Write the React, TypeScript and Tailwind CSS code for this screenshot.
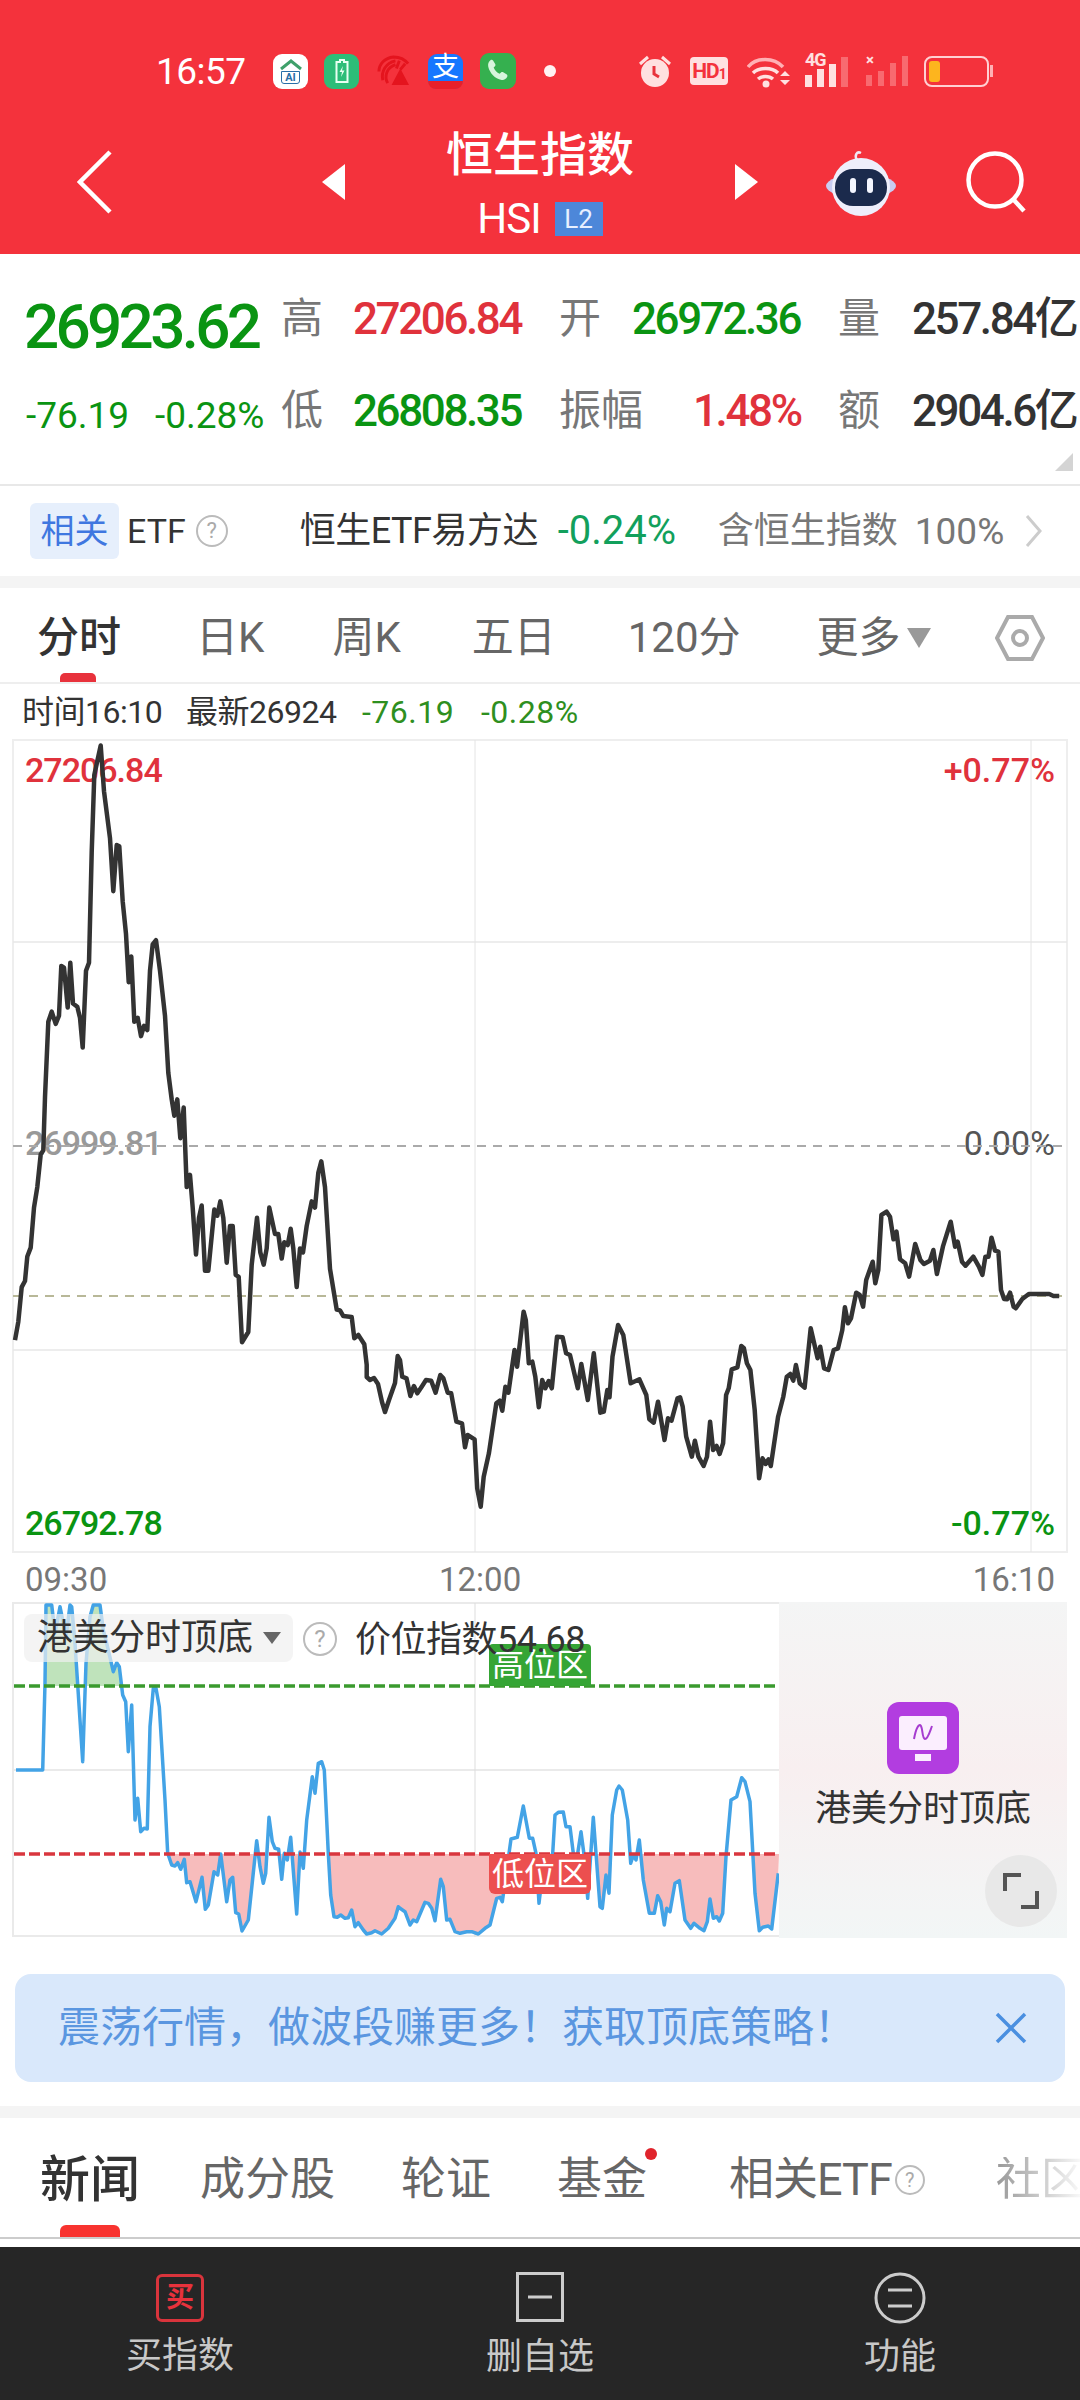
const font = "font-[Roboto,'Noto_Sans_CJK_SC',sans-serif]";

// traced from the chart, [x, y] pairs in the crop's own scale
const toPoints = (raw: number[], ox: number, sx: number, oy: number, sy: number) => {
  const out: string[] = [];
  for (let i = 0; i < raw.length; i += 2) {
    out.push(`${(ox + raw[i] / sx).toFixed(1)},${(oy + raw[i + 1] / sy).toFixed(1)}`);
  }
  return out;
};

const priceA = [
  45,1495,55,1450,65,1365,75,1350,82,1290,92,1268,102,1170,112,1120,122,1040,130,1030,135,900,145,715,155,690,167,720,177,700,184,578,192,582,203,680,211,570,219,670,232,678,240,705,248,778,258,590,267,570,275,300,283,110,302,38,312,150,330,265,340,395,350,282,358,285,368,420,378,500,386,618,394,555,403,715,413,705,423,750,432,725,442,735,450,590,458,525,468,515,480,590,495,700,505,840,515,905,523,945,532,905,541,1000,551,925,560,1120,570,1090,578,1170,588,1285,597,1195,605,1165,615,1325,625,1325,643,1175,652,1190,661,1155,670,1195,680,1305,690,1215,698,1215,707,1335,716,1340,726,1500,745,1475,755,1310,771,1195,781,1280,791,1310,800,1270,808,1170,825,1235,835,1235,845,1295,853,1255,863,1262,872,1222,880,1270,890,1365,900,1270,909,1280,920,1215,935,1155,945,1170,955,1085,964,1057,975,1120,990,1320,1010,1420,1020,1422,1030,1436,1055,1438,1063,1490,1075,1482,1093,1505,1100,1555,
];
const priceB = [
  366.7,1377,370,1380,374,1378,378,1384,382,1402,385,1412,389,1400,395,1383,397.7,1356,
];
const priceC = [
  0,780,5,830,15,835,24,888,32,858,40,880,50,860,60,840,72,842,82,878,93,825,100,835,110,878,118,880,130,965,143,970,150,1042,156,1005,172,1018,178,1165,186,1220,193,1130,205,1060,222,910,230,902,236,932,243,860,250,878,264,750,270,800,285,635,290,660,297,790,305,785,312,830,320,922,328,840,335,865,343,843,350,865,362,710,375,712,383,760,392,765,410,865,418,792,433,900,447,760,462,938,470,935,478,870,483,892,490,770,503,675,515,705,532,850,552,838,568,885,575,958,585,968,595,905,610,1020,618,955,626,962,640,895,646,892,652,920,660,1010,673,1070,680,1022,688,1070,700,1098,708,1070,715,965,722,1050,730,1038,737,1062,745,1030,752,885,758,865,765,808,778,802,787,738,793,745,800,790,808,810,818,930,828,1135,836,1075,843,1092,850,1078,855,1098,872,950,884,890,892,830,900,822,907,842,913,795,922,850,933,863,947,685,963,775,969,740,978,805,988,810,1000,750,1010,745,1020,690,1026,622,1033,670,1040,655,1052,578,1060,585,1068,620,1075,540,1090,485,1096,550,1103,510,1110,345,1122,335,1130,350,1138,418,1145,395,1153,478,1165,490,1174,530,1188,432,1200,480,1208,492,1222,482,1230,450,1238,522,1252,440,1270,365,1280,440,1286,425,1296,485,1304,497,1322,470,1335,500,1343,525,1350,470,1357,470,1364,413,1372,452,1380,455,1386,570,1393,597,1400,598,1407,578,1415,620,1420,625,1435,597,1450,582,1497,582,1507,588,1520,588,
];
const pricePoints = [
  ...toPoints(priceA, 0, 3, 730, 2.45),
  ...toPoints(priceB, 0, 1, 0, 1),
  ...toPoints(priceC, 400, 2.306, 1100, 3),
].join(" ");

const levelA = [
  48,510,128,510,135,250,138,15,155,15,165,100,180,20,198,110,210,15,215,20,225,130,248,485,258,190,270,50,280,15,300,15,310,90,320,130,340,215,350,188,358,200,368,285,377,305,385,455,395,315,405,660,413,595,422,695,432,685,442,687,450,380,460,265,468,265,478,320,495,600,503,760,515,795,525,798,533,788,542,808,553,778,560,848,570,845,588,905,606,832,616,928,625,915,642,815,653,825,662,762,680,905,690,840,698,832,707,938,716,942,726,993,745,960,770,722,780,800,790,850,797,820,807,652,817,725,825,745,836,748,845,838,853,760,862,780,872,712,890,942,900,756,910,805,920,660,937,530,945,580,955,490,965,485,973,510,985,760,992,885,1002,950,1012,952,1022,945,1035,955,1045,953,1055,930,1065,980,1075,968,1090,990,1100,1002,1115,998,1125,992,1145,1002,1165,985,1185,955,1195,920,
];
const levelB = [
  0,925,15,935,30,975,40,960,50,965,75,907,85,910,95,925,105,962,122,838,130,860,140,960,150,958,165,995,180,1000,200,995,215,995,235,1002,255,985,270,975,290,895,300,892,307,905,333,717,352,712,370,618,388,715,398,715,408,760,417,910,430,800,445,790,458,760,465,645,475,637,490,636,498,680,510,680,520,760,530,780,543,695,553,770,563,895,580,652,600,920,607,925,618,825,627,880,637,645,650,570,657,558,667,570,683,660,692,790,700,765,708,780,718,720,730,840,748,940,763,940,773,887,782,905,793,975,800,925,810,935,825,850,838,842,855,960,872,985,882,970,900,985,912,992,922,965,930,897,940,955,950,950,958,963,968,940,978,770,993,600,1010,590,1025,533,1035,545,1050,605,1065,880,1078,992,1088,982,1105,978,1115,987,1135,820,
];
const levelList = [...toPoints(levelA, 0, 3, 1600, 3), ...toPoints(levelB, 400, 3, 1600, 3)];
const levelPoints = levelList.join(" ");

const Help = ({ className }: { className: string }) => (
  <span
    className={`flex shrink-0 items-center justify-center rounded-full border-2 border-[#bbb] text-[#aaa] ${className}`}
  >
    ?
  </span>
);

const StatusBar = () => (
  <div className="flex items-center h-[36px] pl-[156px]">
    <span className="w-[90px] text-[37px] leading-none text-white tracking-[-0.5px]">16:57</span>
    {/* notification icons */}
    <div className="ml-[27px] size-[35px] rounded-[9px] bg-white flex flex-col items-center justify-center">
      <svg viewBox="0 0 24 12" className="w-[24px] h-[12px]">
        <path d="M2 10 L12 2 L22 10" fill="none" stroke="#3fa06a" strokeWidth="3" />
      </svg>
      <span className="text-[11px] leading-none font-bold text-[#2a6fa8] border border-[#2a6fa8] rounded-b-[3px] px-[3px]">
        AI
      </span>
    </div>
    <div className="ml-[16px] size-[35px] rounded-[9px] bg-[#2dbd78] flex items-center justify-center">
      <svg viewBox="0 0 14 24" className="w-[14px] h-[24px]">
        <path d="M5 1h4v2h3.500v20h-11V3H5z" fill="none" stroke="#e8fff2" strokeWidth="2" />
        <path d="M8 7 4.500 13H7l-1 5 3.500-6.500H7z" fill="#e8fff2" />
      </svg>
    </div>
    <svg viewBox="0 0 34 34" className="ml-[18px] w-[33px] h-[33px]" fill="none" stroke="#e4141e" strokeWidth="3">
      <path d="M2 17 C2 9 8 3 17 2 C24 2 29 5 32 9" />
      <path d="M6 26 C4 17 9 8 19 6" />
      <path d="M11 29 C7 22 10 13 19 10" />
      <path d="M23 6 L20 14 M29 9 L24 15" />
      <path d="M24 14 L33 31 H15Z" fill="#e4141e" stroke="none" />
    </svg>
    <div className="relative ml-[18px] w-[35px] h-[35px] rounded-[9px] bg-[#1677ff]">
      <span className="absolute inset-x-0 top-0 text-center text-[27px] leading-[27px] text-white">支</span>
      <div className="absolute inset-x-0 bottom-0 h-[8px] rounded-b-[9px] bg-[#e8202a]" />
    </div>
    <div className="ml-[17px] size-[36px] rounded-[9px] bg-[#35b04f] flex items-center justify-center">
      <svg viewBox="0 0 24 24" className="size-[26px]">
        <path
          d="M5 2c1-.6 2-.3 2.600.600l1.800 3c.4.700.300 1.500-.200 2l-1.200 1.200c1 2.500 3 4.700 5.500 5.800l1.300-1.200c.500-.5 1.300-.6 2-.2l3 1.800c.9.600 1.200 1.700.600 2.600-1 1.800-2.800 3-5 2.600C9 19 4.500 14 3 8c-.5-2.400.3-4.800 2-6z"
          fill="#d6f5dc"
        />
      </svg>
    </div>
    <div className="ml-[28px] size-[12px] rounded-full bg-[#fff2f2]" />

    {/* system icons */}
    <svg viewBox="0 0 32 33" className="ml-[83px] w-[32px] h-[33px]">
      <path d="M1 9 9 2M31 9l-8-7" stroke="#ffe0e0" strokeWidth="3" />
      <circle cx="16" cy="18" r="14" fill="#ffe0e0" />
      <path d="M15 11v8l5 3" fill="none" stroke="#e8323c" strokeWidth="3" />
    </svg>
    <div className="ml-[19px] w-[38px] h-[28px] rounded-[4px] bg-[#ffe0e0] flex items-center justify-center text-[21px] leading-none font-bold text-[#f4323c] tracking-[-1px]">
      HD<span className="text-[14px] mt-[6px]">1</span>
    </div>
    <svg viewBox="0 0 45 34" className="ml-[19px] w-[45px] h-[34px]">
      <path d="M1 13C9 3 27 3 36 13" fill="none" stroke="#ffb0b4" strokeWidth="3.500" />
      <path d="M6 19c6-6 19-6 25 0M11 25c4-3.500 11-3.500 15 0" fill="none" stroke="#ffe0e0" strokeWidth="3.500" />
      <circle cx="19" cy="30" r="3.500" fill="#ffe0e0" />
      <path d="M33 22l5-5 5 5zM33 26l5 5 5-5z" fill="#ffe0e0" />
    </svg>
    <div className="relative ml-[13px] w-[47px] h-[32px] flex items-end gap-[5px]">
      <span className="absolute left-0 -top-[4px] text-[18px] leading-none font-bold text-[#ffe0e0] tracking-[-1px]">
        4G
      </span>
      <div className="w-[7px] h-[12px] bg-[#ffe0e0]" />
      <div className="w-[7px] h-[18px] bg-[#ffe0e0]" />
      <div className="w-[7px] h-[23px] bg-[#ffe0e0]" />
      <div className="w-[7px] h-[30px] bg-[#f86a70]" />
    </div>
    <div className="relative ml-[14px] w-[42px] h-[30px] flex items-end gap-[6px]">
      <span className="absolute left-0 -top-[3px] text-[15px] leading-none font-bold text-[#ffe0e0]">×</span>
      <div className="w-[6px] h-[11px] bg-[#f86a70]" />
      <div className="w-[6px] h-[15px] bg-[#f86a70]" />
      <div className="w-[6px] h-[23px] bg-[#f86a70]" />
      <div className="w-[6px] h-[30px] bg-[#f86a70]" />
    </div>
    <div className="ml-[16px] flex items-center">
      <div className="w-[65px] h-[31px] rounded-[8px] border-[2.5px] border-[#ffd0d2] p-[3px]">
        <div className="w-[11px] h-full rounded-[3px] bg-[#fdb51e]" />
      </div>
      <div className="ml-[1px] w-[3px] h-[12px] bg-[#ffb0b4]" />
    </div>
  </div>
);

const Robot = () => (
  <svg viewBox="0 0 72 68" className="w-[72px] h-[68px]">
    <path d="M32 12c-3-5 0-9 4-7" fill="none" stroke="#f0e8f4" strokeWidth="2.500" />
    <ellipse cx="36" cy="38" rx="35" ry="12" fill="#c9cdf2" />
    <circle cx="36" cy="39" r="29" fill="#eeeefb" />
    <rect x="10" y="21" width="52" height="37" rx="18" fill="#1b2a4c" />
    <rect x="25" y="30" width="6" height="15" rx="3" fill="#f4f6ff" />
    <rect x="42" y="30" width="6" height="15" rx="3" fill="#f4f6ff" />
  </svg>
);

const Header = () => (
  <div className="h-[254px] bg-[#f4323c] pt-[53px]">
    <StatusBar />
    <div className="flex items-center h-[150px] mt-[18px] pl-[77px]">
      <svg viewBox="0 0 35 64" className="w-[35px] h-[64px]">
        <path d="M33 2 3 32l30 30" fill="none" stroke="#fff" strokeWidth="4.500" />
      </svg>
      <svg viewBox="0 0 23 36" className="ml-[210px] w-[23px] h-[36px]">
        <path d="M23 0v36L0 18z" fill="#fff" />
      </svg>
      <div className="w-[390px] flex flex-col items-center text-white">
        <span className="text-[47px] leading-[56px] font-medium">恒生指数</span>
        <div className="flex items-center mt-[18px] h-[36px]">
          <span className="text-[42px] leading-none tracking-[-1px]">HSI</span>
          <span className="ml-[14px] w-[48px] h-[34px] flex items-center justify-center bg-[#4d87d9] text-[26px] leading-none text-[#e8f0ff]">
            L2
          </span>
        </div>
      </div>
      <svg viewBox="0 0 23 36" className="w-[23px] h-[36px]">
        <path d="M0 0v36l23-18z" fill="#fff" />
      </svg>
      <div className="ml-[67px]">
        <Robot />
      </div>
      <svg viewBox="0 0 60 62" className="ml-[69px] w-[60px] h-[62px]">
        <circle cx="29" cy="29" r="26.500" fill="none" stroke="#fff" strokeWidth="4.500" />
        <path d="M47 48l11 12" stroke="#fff" strokeWidth="4.500" />
      </svg>
    </div>
  </div>
);

const StatValue = ({ w, className, children }: { w: string; className: string; children: string }) => (
  <span className={`${w} shrink-0 text-[44px] leading-none font-medium tracking-[-2.4px] whitespace-nowrap ${className}`}>
    {children}
  </span>
);

const Label = ({ w, children }: { w: string; children: string }) => (
  <span className={`${w} shrink-0 text-[42px] leading-none text-[#777]`}>{children}</span>
);

const Quote = () => (
  <div className="relative h-[232px] border-b-2 border-[#e8e8e8] pt-[41px]">
    <div className="flex items-center h-[48px]">
      <span className="w-[281px] shrink-0 pl-[24px] text-[62px] leading-none font-medium text-[#0a9412] tracking-[-3.7px] mt-[16px]">
        26923.62
      </span>
      <Label w="w-[72px]">高</Label>
      <StatValue w="w-[206px]" className="text-[#e0323c]">27206.84</StatValue>
      <Label w="w-[73px]">开</Label>
      <StatValue w="w-[206px]" className="text-[#0a9412]">26972.36</StatValue>
      <Label w="w-[74px]">量</Label>
      <StatValue w="w-[168px]" className="text-[#333]">257.84亿</StatValue>
    </div>
    <div className="flex items-center h-[48px] mt-[44px]">
      <div className="w-[281px] shrink-0 flex pl-[26px] text-[37px] leading-none text-[#0a9412] mt-[8px]">
        <span className="w-[129px]">-76.19</span>
        <span>-0.28%</span>
      </div>
      <Label w="w-[72px]">低</Label>
      <StatValue w="w-[206px]" className="text-[#0a9412]">26808.35</StatValue>
      <Label w="w-[134px]">振幅</Label>
      <StatValue w="w-[145px]" className="text-[#e0323c]">1.48%</StatValue>
      <Label w="w-[74px]">额</Label>
      <StatValue w="w-[168px]" className="text-[#333]">2904.6亿</StatValue>
    </div>
    <svg viewBox="0 0 18 18" className="absolute right-[7px] top-[199px] size-[18px]">
      <path d="M18 0v18H0z" fill="#d4d4d4" />
    </svg>
  </div>
);

const EtfRow = () => (
  <div className="h-[90px] flex items-center pl-[30px]">
    <span className="w-[89px] h-[56px] rounded-[6px] bg-[#e6effc] flex items-center justify-center text-[34px] leading-none text-[#3f77e0]">
      相关
    </span>
    <span className="ml-[8px] text-[34px] leading-none text-[#333]">ETF</span>
    <Help className="ml-[10px] size-[32px] text-[22px] leading-none" />
    <span className="ml-[72px] w-[240px] text-[36px] leading-none text-[#333] tracking-[-0.5px] whitespace-nowrap">
      恒生ETF易方达
    </span>
    <span className="ml-[18px] w-[160px] text-[40px] leading-none text-[#12a05c]">-0.24%</span>
    <span className="w-[197px] text-[36px] leading-none text-[#777]">含恒生指数</span>
    <span className="w-[110px] text-[37px] leading-none text-[#777]">100%</span>
    <svg viewBox="0 0 17 32" className="w-[17px] h-[32px]">
      <path d="M2 1l13 15L2 31" fill="none" stroke="#ccc" strokeWidth="3" />
    </svg>
  </div>
);

const PeriodTabs = () => (
  <div className="relative h-[96px] border-b-2 border-[#eee] flex items-center pt-[5px] text-[42px] leading-none text-[#666]">
    <span className="ml-[37px] font-medium text-[#333]">分时</span>
    <span className="ml-[75px]">日K</span>
    <span className="ml-[68px]">周K</span>
    <span className="ml-[71px]">五日</span>
    <span className="ml-[72px]">120分</span>
    <span className="ml-[76px]">更多</span>
    <svg viewBox="0 0 24 20" className="ml-[6px] w-[24px] h-[20px]">
      <path d="M0 0h24L12 20z" fill="#999" />
    </svg>
    <svg viewBox="0 0 50 46" className="ml-[64px] w-[50px] h-[46px]">
      <path d="M13 2h24l11 21-11 21H13L2 23z" fill="none" stroke="#aaa" strokeWidth="4" />
      <circle cx="25" cy="23" r="7" fill="none" stroke="#aaa" strokeWidth="4" />
    </svg>
    <div className="absolute left-[60px] bottom-0 w-[36px] h-[9px] rounded-t-[5px] bg-[#e8323c]" />
  </div>
);

const InfoRow = () => (
  <div className="h-[55px] flex items-center pl-[22px] text-[32px] leading-none text-[#333] tracking-[-0.5px]">
    <span className="w-[164px]">时间16:10</span>
    <span className="w-[176px]">最新26924</span>
    <span className="w-[119px] text-[#2e8f20] tracking-[0.5px]">-76.19</span>
    <span className="text-[#2e8f20] tracking-[0.5px]">-0.28%</span>
  </div>
);

const PriceChart = () => (
  <div className="relative ml-[12px] w-[1056px] h-[814px]">
    <span className="absolute z-0 left-[13px] top-[12px] text-[34px] leading-[38px] font-medium tracking-[-1px] text-[#e0323c]">27206.84</span>
    <span className="absolute z-0 right-[13px] top-[12px] text-[34px] leading-[38px] font-medium text-[#e0323c]">+0.77%</span>
    <span className="absolute z-0 left-[13px] top-[385px] text-[34px] leading-[38px] font-medium tracking-[-1px] text-[#999]">26999.81</span>
    <span className="absolute z-0 right-[13px] top-[385px] text-[34px] leading-[38px] text-[#555]">0.00%</span>
    <span className="absolute z-0 left-[13px] top-[765px] text-[34px] leading-[38px] font-medium tracking-[-1px] text-[#0a9412]">26792.78</span>
    <span className="absolute z-0 right-[13px] top-[765px] text-[34px] leading-[38px] font-medium text-[#0a9412]">-0.77%</span>
    <svg viewBox="12 739 1056 814" className="relative z-10 block w-[1056px] h-[814px]">
      <rect x="13" y="740" width="1054" height="812" fill="none" stroke="#eee" strokeWidth="2" />
      <path d="M13 942h1054M13 1350h1054" stroke="#e8e8e8" strokeWidth="1.500" />
      <path d="M475 740v812M1031 740v812" stroke="#e4e4e4" strokeWidth="1" />
      <path d="M13 1146h1054" stroke="#aaa" strokeWidth="2" strokeDasharray="9 7" />
      <path d="M13 1296h1054" stroke="#b8b898" strokeWidth="2" strokeDasharray="9 7" />
      <polyline points={pricePoints} fill="none" stroke="#333" strokeWidth="4.500" strokeLinejoin="round" />
    </svg>
  </div>
);

const TimeAxis = () => (
  <div className="relative h-[49px] text-[33px] leading-none text-[#777]">
    <span className="absolute left-[25px] top-[10px]">09:30</span>
    <span className="absolute left-[439px] top-[10px]">12:00</span>
    <span className="absolute right-[25px] top-[10px]">16:10</span>
  </div>
);

const IndicatorChart = () => {
  const area = `16,1854 ${levelPoints} 779,1854`;
  const greenArea = `16,1686 ${levelPoints} 779,1686`;
  return (
    <div className="relative w-[767px] h-[336px]">
      <svg viewBox="12 1602 767 336" className="block w-[767px] h-[336px]">
        <defs>
          <clipPath id="above">
            <rect x="12" y="1602" width="767" height="84" />
          </clipPath>
          <clipPath id="below">
            <rect x="12" y="1854" width="767" height="84" />
          </clipPath>
        </defs>
        <path d="M12 1603h767M12 1770h767M12 1936h767" stroke="#eaeaea" strokeWidth="2" />
        <path d="M13 1603v334" stroke="#eaeaea" strokeWidth="2" />
        <path d="M475 1603v334" stroke="#ddd" strokeWidth="1" />
        <polygon points={greenArea} fill="#bfe3bb" clipPath="url(#above)" />
        <polygon points={area} fill="#f7bcbc" clipPath="url(#below)" />
        <polyline points={levelPoints} fill="none" stroke="#43a3e6" strokeWidth="3.500" strokeLinejoin="round" />
        <path d="M14 1686h765" stroke="#3a9a2e" strokeWidth="3.500" strokeDasharray="11 4" />
        <path d="M14 1854h765" stroke="#d9363e" strokeWidth="3.500" strokeDasharray="11 4" />
      </svg>
      <div className="absolute left-[477px] top-[42px] w-[102px] h-[42px] rounded-t-[4px] bg-[#35a535] flex items-center justify-center text-[32px] leading-none text-white">
        高位区
      </div>
      <div className="absolute left-[477px] top-[252px] w-[102px] h-[40px] rounded-b-[6px] bg-[#ec4f4f] flex items-center justify-center text-[32px] leading-none text-white">
        低位区
      </div>
      <div className="absolute left-[12px] top-[12px] w-[269px] h-[48px] rounded-[8px] bg-[#f0f0f0]/70 flex items-center pl-[13px] text-[36px] leading-none text-[#333]">
        港美分时顶底
        <svg viewBox="0 0 18 12" className="ml-[10px] w-[18px] h-[12px]">
          <path d="M0 0h18L9 12z" fill="#666" />
        </svg>
      </div>
      <Help className="absolute left-[291px] top-[20px] size-[34px] text-[24px] leading-none" />
      <span className="absolute left-[343px] top-[20px] text-[36px] leading-none text-[#333] tracking-[-0.5px]">
        价位指数54.68
      </span>
    </div>
  );
};

const IndicatorPromo = () => (
  <div className="relative w-[288px] h-[336px] flex flex-col items-center pt-[100px] bg-linear-to-b from-[#f4f5f5] via-[#f8eff0] to-[#f2f6f6]">
    <div className="w-[72px] h-[72px] rounded-[12px] bg-[#b23de0] flex items-center justify-center">
      <svg viewBox="0 0 48 52" className="w-[48px] h-[52px]">
        <rect x="0" y="4" width="48" height="34" rx="3" fill="#fbeefe" />
        <rect x="16" y="42" width="16" height="7" fill="#fbeefe" />
        <path d="M15 27C17 16 20 11 22 14c2 4 1 12 4 13 3 0 5-8 7-13" fill="none" stroke="#a63cd0" strokeWidth="2" />
      </svg>
    </div>
    <span className="mt-[17px] text-[36px] leading-none text-[#333]">港美分时顶底</span>
    <div className="absolute right-[10px] top-[253px] size-[72px] rounded-full bg-[#e8e8e8] flex items-center justify-center">
      <svg viewBox="0 0 36 36" className="size-[36px]">
        <path d="M2 18V2h16M34 18v16H18" fill="none" stroke="#555" strokeWidth="4" />
      </svg>
    </div>
  </div>
);

const Banner = () => (
  <div className="mt-[36px] mx-[15px] h-[108px] rounded-[16px] bg-[#d9e8fb] flex items-center justify-between pl-[43px] pr-[38px]">
    <span className="text-[42px] leading-none text-[#5a96e0] whitespace-nowrap">
      震荡行情，做波段赚更多！获取顶底策略！
    </span>
    <svg viewBox="0 0 32 32" className="size-[32px]">
      <path d="M2 2l28 28M30 2 2 30" stroke="#4a8fe0" strokeWidth="3.500" />
    </svg>
  </div>
);

const NewsTabs = () => (
  <div className="relative h-[121px] border-b-2 border-[#ccc] overflow-hidden flex items-center pt-[4px] whitespace-nowrap text-[45px] leading-none text-[#666]">
    <span className="ml-[40px] shrink-0 text-[50px] font-medium text-[#333]">新闻</span>
    <span className="ml-[60px] shrink-0">成分股</span>
    <span className="ml-[66px] shrink-0">轮证</span>
    <span className="relative ml-[66px] shrink-0">
      基金
      <span className="absolute -right-[10px] -top-[9px] size-[12px] rounded-full bg-[#e0242c]" />
    </span>
    <span className="ml-[82px] shrink-0 tracking-[-1px]">相关ETF</span>
    <Help className="ml-[3px] size-[30px] text-[20px] leading-none" />
    <span className="ml-[71px] shrink-0 bg-linear-to-r from-[#999] to-[#fff] bg-clip-text text-transparent">社区</span>
    <div className="absolute left-[60px] bottom-0 w-[60px] h-[12px] rounded-t-[6px] bg-[#f8332f]" />
  </div>
);

const BottomBar = () => (
  <div className="mt-[8px] h-[153px] bg-[#262626] flex text-[36px] leading-none text-[#c8c8c8]">
    <div className="flex-1 flex flex-col items-center pt-[27px]">
      <div className="size-[48px] rounded-[6px] border-[3px] border-[#d9343c] flex items-center justify-center text-[28px] leading-none font-bold text-[#e8323c]">
        买
      </div>
      <span className="mt-[16px]">买指数</span>
    </div>
    <div className="flex-1 flex flex-col items-center pt-[25px]">
      <svg viewBox="0 0 48 50" className="w-[48px] h-[50px]">
        <rect x="1.500" y="1.500" width="45" height="47" fill="none" stroke="#ccc" strokeWidth="3" />
        <path d="M12 25h24" stroke="#ccc" strokeWidth="3" />
      </svg>
      <span className="mt-[17px]">删自选</span>
    </div>
    <div className="flex-1 flex flex-col items-center pt-[25px]">
      <svg viewBox="0 0 52 52" className="size-[52px]">
        <circle cx="26" cy="26" r="24" fill="none" stroke="#ccc" strokeWidth="3" />
        <path d="M14 18h24M14 34h24" stroke="#ccc" strokeWidth="3" />
      </svg>
      <span className="mt-[15px]">功能</span>
    </div>
  </div>
);

export default function App() {
  return (
    <div className={`w-[1080px] h-[2400px] bg-white overflow-hidden ${font}`}>
      <Header />
      <Quote />
      <EtfRow />
      <div className="h-[12px] bg-[#f4f4f4]" />
      <PeriodTabs />
      <InfoRow />
      <PriceChart />
      <TimeAxis />
      <div className="ml-[12px] flex">
        <IndicatorChart />
        <IndicatorPromo />
      </div>
      <Banner />
      <div className="mt-[24px] h-[12px] bg-[#f4f4f4]" />
      <NewsTabs />
      <BottomBar />
    </div>
  );
}
